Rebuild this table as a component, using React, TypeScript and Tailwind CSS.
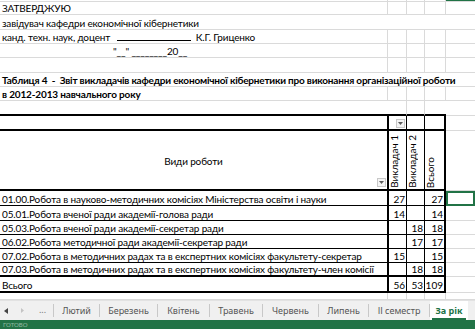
import type { ReactNode } from 'react'

type Data = { label: string; b?: string; c?: string; d: string; h: string }

const rows: Data[] = [
  { label: '01.00.Робота в науково-методичних комісіях Міністерства освіти і науки', b: '27', d: '27', h: 'h-[15px]' },
  { label: '05.01.Робота вченої ради академії-голова ради', b: '14', d: '14', h: 'h-[15px]' },
  { label: '05.03.Робота вченої ради академії-секретар ради', c: '18', d: '18', h: 'h-[14px]' },
  { label: '06.02.Робота методичної ради академії-секретар ради', c: '17', d: '17', h: 'h-[14px]' },
  { label: '07.02.Робота в методичних радах та в експертних комісіях факультету-секретар', b: '15', d: '15', h: 'h-[14px]' },
  { label: '07.03.Робота в методичних радах та в експертних комісіях факультету-член комісії', c: '18', d: '18', h: 'h-[14px]' },
]

const tabs = [
  { label: 'Лютий', w: 'w-[45px]' },
  { label: 'Березень', w: 'w-[57px]' },
  { label: 'Квітень', w: 'w-[51px]' },
  { label: 'Травень', w: 'w-[52px]' },
  { label: 'Червень', w: 'w-[55px]' },
  { label: 'Липень', w: 'w-[49px]' },
  { label: 'ІІ семестр', w: 'w-[60px]' },
]

// plain worksheet row with light gridlines
function Plain({ h, children, eCls = '' }: { h: string; children?: ReactNode; eCls?: string }) {
  return (
    <div className={`flex shrink-0 ${h}`}>
      <div className="w-[388px] shrink-0 border-b border-r border-[#dadada] flex items-end pl-[2px] whitespace-pre leading-[12px]">
        {children}
      </div>
      <div className="w-[19px] shrink-0 border-b border-r border-[#dadada]" />
      <div className="w-[18px] shrink-0 border-b border-r border-[#dadada]" />
      <div className="w-[21px] shrink-0 border-b border-r border-[#dadada]" />
      <div className={`flex-1 border-b border-[#dadada] ${eCls}`} />
    </div>
  )
}

// row whose text runs over the other columns
function Merged({ h, children, bold }: { h: string; children?: ReactNode; bold?: boolean }) {
  return (
    <div className={`flex shrink-0 ${h} border-b border-[#dadada] items-end pl-[2px] whitespace-pre leading-[12px] ${bold ? 'font-bold tracking-[-0.2px]' : ''}`}>
      {children}
    </div>
  )
}

function FilterBtn() {
  return (
    <div className="w-[9px] h-[9px] border border-[#c8c8c8] bg-[#f4f4f4] flex items-center justify-center">
      <svg width="5" height="3" viewBox="0 0 5 3">
        <path d="M0 0h5L2.5 3z" fill="#5a5a5a" />
      </svg>
    </div>
  )
}

function Num({ children }: { children?: ReactNode }) {
  return <span className="leading-[12px] tracking-normal">{children}</span>
}

function DataRow({ r, last }: { r: Data; last?: boolean }) {
  const bb = last ? 'border-b-2' : 'border-b'
  return (
    <div className={`flex shrink-0 ${r.h}`}>
      <div className={`w-[389px] shrink-0 ${bb} border-r-2 border-black flex items-end pl-[2px] whitespace-nowrap leading-[12px]`}>
        {r.label}
      </div>
      <div className={`w-[18px] shrink-0 ${bb} border-r border-black flex items-end justify-end pr-px`}>
        <Num>{r.b}</Num>
      </div>
      <div className={`w-[18px] shrink-0 ${bb} border-r border-black flex items-end justify-end pr-px`}>
        <Num>{r.c}</Num>
      </div>
      <div className={`w-[21px] shrink-0 ${bb} border-r-2 border-black flex items-end justify-end pr-px`}>
        <Num>{r.d}</Num>
      </div>
      <div
        className={`flex-1 ${
          r.label.startsWith('01.00') ? 'border-2 border-[#217346]' : 'border-b border-[#dadada]'
        }`}
      />
    </div>
  )
}

function Vertical({ children }: { children: ReactNode }) {
  return (
    <div className="[writing-mode:vertical-rl] rotate-180 leading-[10px] pt-[1px] whitespace-nowrap tracking-normal">
      {children}
    </div>
  )
}

function TabBar() {
  return (
    <div className="h-[20px] shrink-0 flex items-center bg-[#f0f0f0] border-t border-[#e2e2e2] [font-family:'Noto_Sans',sans-serif] text-[9px] text-[#555] tracking-normal">
      <div className="w-[12px] flex justify-center">
        <svg width="4" height="6" viewBox="0 0 4 6">
          <path d="M4 0v6L0 3z" fill="#444" />
        </svg>
      </div>
      <div className="w-[20px] flex justify-center">
        <svg width="3" height="5" viewBox="0 0 3 5">
          <path d="M0 0v5l3-2.5z" fill="#c4c4c4" />
        </svg>
      </div>
      <div className="w-[21px] flex justify-center text-[#777] pb-[2px]">...</div>
      {tabs.map((t) => (
        <div key={t.label} className="flex items-center h-full">
          <div className="w-px h-[13px] bg-[#c8c8c8]" />
          <div className={`${t.w} text-center`}>{t.label}</div>
        </div>
      ))}
      <div className="w-px h-[13px] bg-[#c8c8c8]" />
      <div className="w-[38px] h-full bg-white flex items-center justify-center">
        <span className="font-bold text-[#217346] border-b-2 border-[#217346] px-[3px] pt-[2px] leading-[14px]">
          За рік
        </span>
      </div>
    </div>
  )
}

export default function App() {
  return (
    <div className="w-[475px] h-[329px] overflow-hidden bg-white flex flex-col [font-family:Lato,sans-serif] text-[10px] tracking-[-0.15px] text-black">
      <Plain h="h-[2px]" eCls="bg-[#217346]" />
      <Plain h="h-[13px]">ЗАТВЕРДЖУЮ</Plain>
      <Merged h="h-[15px]">завідувач кафедри економічної кібернетики</Merged>
      <Plain h="h-[14px]">
        <span>канд. техн. наук, доцент </span>
        <span className="inline-block w-[74px] border-b border-black mb-[2px] ml-[4px] mr-[5px]" />
        <span>К.Г. Гриценко</span>
      </Plain>
      <Plain h="h-[14px]">
        <span className="pl-[111px]">"__" ________20__</span>
      </Plain>
      <Plain h="h-[15px]" />
      <Merged h="h-[14px]" bold>
        Таблиця 4  -  Звіт викладачів кафедри економічної кібернетики про виконання організаційної роботи
      </Merged>
      <Plain h="h-[14px]">
        <span className="font-bold">в 2012-2013 навчального року</span>
      </Plain>

      {/* row above the table: its bottom is the table's top border */}
      <div className="flex shrink-0 h-[15px]">
        <div className="w-[389px] shrink-0 border-b-2 border-black" />
        <div className="w-[18px] shrink-0 border-b-2 border-black border-r border-r-[#dadada]" />
        <div className="w-[18px] shrink-0 border-b-2 border-black border-r border-r-[#dadada]" />
        <div className="w-[21px] shrink-0 border-b-2 border-black" />
        <div className="flex-1 border-b border-[#dadada]" />
      </div>

      <div className="flex shrink-0 h-[15px]">
        <div className="w-[389px] shrink-0 border-b-2 border-r-2 border-black" />
        <div className="w-[18px] shrink-0 border-b-2 border-r border-black flex items-end justify-end pr-[1px] pb-[1px]">
          <FilterBtn />
        </div>
        <div className="w-[18px] shrink-0 border-b-2 border-r border-black" />
        <div className="w-[21px] shrink-0 border-b-2 border-r-2 border-black" />
        <div className="flex-1 border-b border-[#dadada]" />
      </div>

      <div className="flex shrink-0 h-[60px]">
        <div className="relative w-[389px] shrink-0 border-b-2 border-r-2 border-black flex items-center justify-center">
          <span className="pt-[3px]">Види роботи</span>
          <div className="absolute right-[1px] bottom-[2px]">
            <FilterBtn />
          </div>
        </div>
        <div className="w-[18px] shrink-0 border-b-2 border-r border-black flex items-end">
          <Vertical>Викладач 1</Vertical>
        </div>
        <div className="w-[18px] shrink-0 border-b-2 border-r border-black flex items-end">
          <Vertical>Викладач 2</Vertical>
        </div>
        <div className="w-[21px] shrink-0 border-b-2 border-r-2 border-black flex items-end">
          <Vertical>Всього</Vertical>
        </div>
        <div className="flex-1 border-b border-[#dadada]" />
      </div>

      {rows.map((r, i) => (
        <DataRow key={r.label} r={r} last={i === rows.length - 1} />
      ))}

      <DataRow r={{ label: 'Всього', b: '56', c: '53', d: '109', h: 'h-[16px]' }} last />

      <Plain h="h-[7px]" />
      <TabBar />
      <div className="h-[9px] shrink-0 bg-[#217346] pl-[3px] overflow-hidden">
        <span className="block text-[6px] leading-[6px] pt-[2px] tracking-normal text-white/50">ГОТОВО</span>
      </div>
    </div>
  )
}
